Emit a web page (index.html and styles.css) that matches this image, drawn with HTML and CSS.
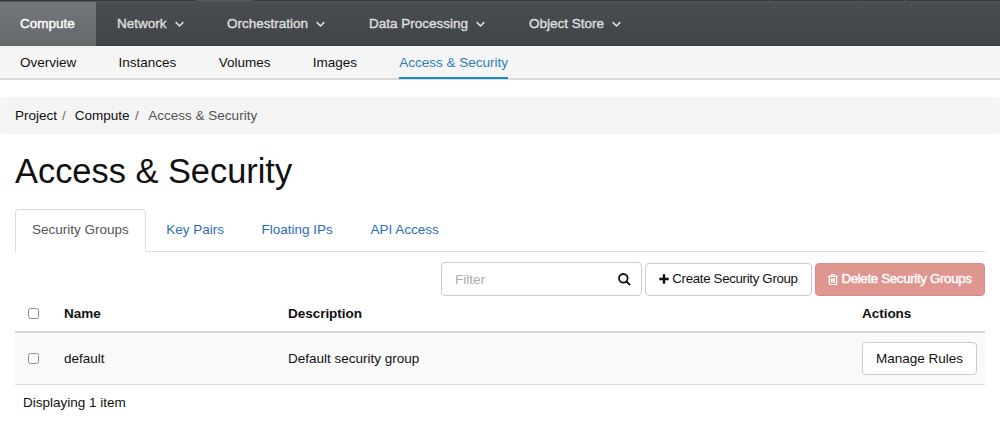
FILE: index.html
```html
<!DOCTYPE html>
<html lang="en">
<head>
<meta charset="utf-8">
<title>Access &amp; Security</title>
<link rel="stylesheet" href="styles.css">
</head>
<body>
<div class="strip"><span class="strip-active"></span><span class="tick"></span><span class="tick tick-b"></span><span class="tick tick-c"></span></div>
<nav class="main-nav">
  <a class="nav-item active">Compute</a>
  <a class="nav-item">Network<svg class="caret" viewBox="0 0 8 6"><path d="M.6 1 4 4.4 7.4 1"/></svg></a>
  <a class="nav-item">Orchestration<svg class="caret" viewBox="0 0 8 6"><path d="M.6 1 4 4.4 7.4 1"/></svg></a>
  <a class="nav-item">Data Processing<svg class="caret" viewBox="0 0 8 6"><path d="M.6 1 4 4.4 7.4 1"/></svg></a>
  <a class="nav-item">Object Store<svg class="caret" viewBox="0 0 8 6"><path d="M.6 1 4 4.4 7.4 1"/></svg></a>
</nav>
<nav class="sub-nav">
  <a>Overview</a><a>Instances</a><a>Volumes</a><a>Images</a><a class="current">Access &amp; Security</a>
</nav>
<div class="breadcrumb"><a>Project</a><i>/</i><a>Compute</a><i class="second">/</i><span>Access &amp; Security</span></div>
<main class="content">
  <h1>Access &amp; Security</h1>
  <div class="tabs">
    <a class="tab selected">Security Groups</a><a class="tab">Key Pairs</a><a class="tab">Floating IPs</a><a class="tab">API Access</a>
  </div>
  <div class="toolbar">
    <div class="filter"><span>Filter</span><svg class="search" viewBox="0 0 13 13"><circle cx="5.3" cy="5.3" r="4.3"/><path d="m8.5 8.5 3.6 3.6"/></svg></div>
    <button class="btn create"><svg class="plus" viewBox="0 0 10 10"><path d="M5 .3v9.4M.3 5h9.4"/></svg>Create Security Group</button>
    <button class="btn delete"><svg class="trash" viewBox="0 0 10 11"><path d="M0 2.4h10M3.2 2.2l.6-1.6h2.4l.6 1.6M1.3 2.6v7.1q0 .8.8.8h5.8q.8 0 .8-.8V2.6M3.5 4.3v4.5M5 4.3v4.5M6.5 4.3v4.5"/></svg>Delete Security Groups</button>
  </div>
  <div class="table">
    <div class="row head"><span class="check"></span><b>Name</b><b>Description</b><b>Actions</b></div>
    <div class="row item"><span class="check"></span><span>default</span><span>Default security group</span><button class="btn manage">Manage Rules</button></div>
  </div>
  <div class="count">Displaying 1 item</div>
</main>
</body>
</html>
```
FILE: styles.css
```css
* { box-sizing: border-box; }
body {
  margin: 0;
  height: 435px;
  overflow: hidden;
  background: #fff;
  color: #111;
  font: 13.5px/18px "Liberation Sans", Arial, sans-serif;
}
.strip { display: flex; height: 1px; background: #35383b; }
.strip-active { width: 57px; margin-left: 196px; background: #54575b; }
.tick { width: 1px; margin-left: 516px; background: #595c60; }
.tick-b { margin-left: 88px; }
.tick-c { margin-left: 45px; }
.main-nav {
  display: grid;
  grid-template-columns: 96px 110px 142px 160px 1fr;
  height: 45px;
  background: linear-gradient(#4a4d52, #404548);
  border-top: 1px solid #505357;
  border-bottom: 1px solid #353a3e;
}
.nav-item {
  display: flex;
  align-items: center;
  padding-left: 21px;
  color: #dcdddd;
  -webkit-text-stroke: .4px currentColor;
}
.nav-item.active {
  padding-left: 20px;
  margin-bottom: -1px;
  padding-bottom: 1px;
  background: linear-gradient(#73767b, #65696c);
  color: #fff;
}
.caret { width: 9px; height: 6.75px; margin: 1px 0 0 8px; fill: none; stroke: #dcdddd; stroke-width: 1.4; }
.sub-nav {
  display: flex;
  gap: 42.3px;
  height: 34px;
  padding-left: 20px;
  background: #f5f5f5;
  border-bottom: 2px solid #dcdcdc;
  line-height: 33px;
}
.current { height: 33px; border-bottom: 2px solid #178acb; color: #2a80b9; }
.breadcrumb {
  height: 37px;
  margin-top: 17px;
  padding-left: 15px;
  background: #f4f4f4;
  border-radius: 4px;
  line-height: 37px;
}
.breadcrumb i { margin: 0 9px 0 5px; color: #666; font-style: normal; }
.breadcrumb .second { margin: 0 9.5px 0 5.5px; }
.breadcrumb span { color: #555; }
.content { padding: 0 15px; }
h1 { margin: 17px 0 18px; font-size: 34.4px; font-weight: 400; line-height: 40px; }
.tabs { display: flex; gap: 3.5px; height: 43px; border-bottom: 1px solid #ddd; }
.tab { height: 43px; padding: 12px 17px; color: #2a6db8; }
.selected {
  background: #fff;
  border: 1px solid #ddd;
  border-bottom-color: #fff;
  border-radius: 4px 4px 0 0;
  padding: 11px 16px;
  color: #555;
}
.toolbar { display: flex; justify-content: flex-end; align-items: flex-end; gap: 3px; height: 44px; }
.filter {
  display: flex;
  align-items: center;
  justify-content: space-between;
  width: 201px;
  height: 34px;
  padding: 0 10px 0 13px;
  background: #fff;
  border: 1px solid #ccc;
  border-radius: 4px;
  color: #aaa;
}
.filter span { padding-top: 1px; }
.search { width: 13px; height: 13px; fill: none; stroke: #111; stroke-width: 1.8; }
.btn {
  display: flex;
  align-items: center;
  justify-content: center;
  height: 33px;
  padding: 0;
  background: #fff;
  border: 1px solid #ccc;
  border-radius: 4px;
  color: #111;
  font: inherit;
  white-space: nowrap;
}
.create, .delete { font-size: 13.3px; letter-spacing: -.33px; padding-bottom: 1px; }
.create { width: 167px; }
.delete { width: 170px; background: #df9690; border-color: #da8983; color: #fff; -webkit-text-stroke: .4px #fff; }
.plus { width: 10px; height: 10px; margin-right: 3px; stroke: #111; stroke-width: 2.4; }
.trash { width: 10px; height: 11px; margin-right: 3px; fill: none; stroke: #fff; stroke-width: 1.2; }
.row { display: grid; grid-template-columns: 49px 224px 574px 1fr; align-items: center; }
.head { height: 37px; border-bottom: 2px solid #d9d9d9; letter-spacing: -.03px; }
.item { height: 52px; background: #f9f9f9; border-bottom: 1px solid #ddd; }
.check { width: 11px; height: 11px; margin-left: 13px; background: #fff; border: 1px solid #8b8b8b; border-radius: 2.5px; }
.manage { width: 115px; height: 33px; }
.count { padding: 9px 8px; }
```
